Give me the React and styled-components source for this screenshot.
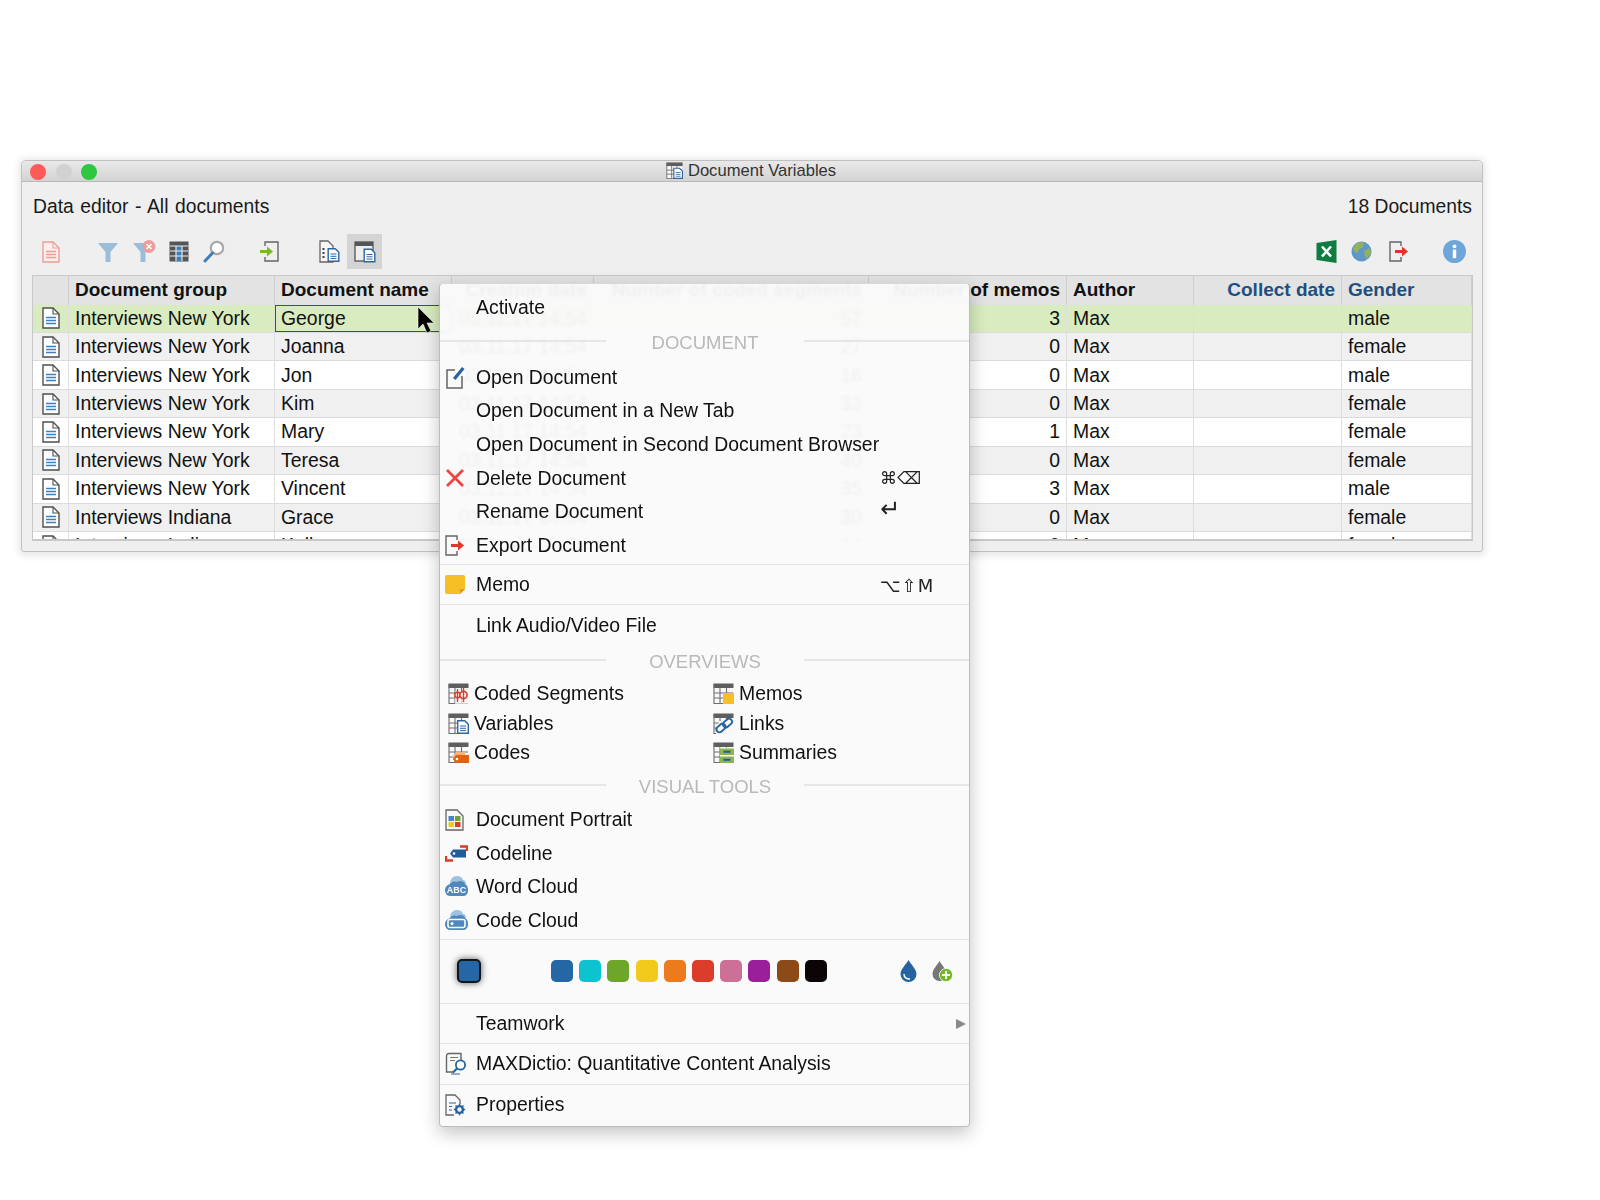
import React from 'react';
import styled, { createGlobalStyle } from 'styled-components';

const GlobalStyle = createGlobalStyle`
    html, body {
        margin: 0;
        background: #fff;
        font-family: "Liberation Sans", Arial, sans-serif;
        color: #111;
    }
`;

const COLS = '36px 206px 177px 142px 275px 198px 127px 148px 130px';

const Page = styled.div`
    position: relative;
    height: 1200px;
    padding: 160px 0 0 21px;
    box-sizing: border-box;
    overflow: hidden;
`;

const Win = styled.div`
    width: 1462px;
    height: 392px;
    box-sizing: border-box;
    background: #efefef;
    border: 1px solid #c0c0c0;
    border-radius: 5px 5px 3px 3px;
    box-shadow: 0 1px 7px 3px rgba(0, 0, 0, 0.09);
    overflow: hidden;
`;

const TitleBar = styled.div`
    position: relative;
    height: 21px;
    display: flex;
    align-items: center;
    justify-content: center;
    gap: 5px;
    padding: 0 2px 1px 0;
    box-sizing: border-box;
    font-size: 16.6px;
    color: #333;
    background: linear-gradient(#e9e9e9, #d3d3d3);
    border-bottom: 1px solid #b9b9b9;
`;

const Lights = styled.div`
    position: absolute;
    left: 8px;
    top: 2.5px;
    display: flex;
    gap: 9.5px;
`;

const Light = styled.span`
    width: 16px;
    height: 16px;
    border-radius: 50%;
    background: ${p => p.$color};
`;

const HeadRow = styled.div`
    height: 52px;
    padding: 0 10px 2px 11px;
    box-sizing: border-box;
    display: flex;
    align-items: center;
    justify-content: space-between;
    font-size: 19.3px;
    color: #1a1a1a;
`;

const HeadTitle = styled.span`
    word-spacing: 1.2px;
`;

const Toolbar = styled.div`
    height: 35px;
    margin-bottom: 6px;
    padding: 0 10px 0 11px;
    display: flex;
    align-items: center;
`;

const Tool = styled.div`
    width: 35px;
    height: 35px;
    flex: none;
    display: flex;
    align-items: center;
    justify-content: center;
    background: ${p => (p.$active ? '#d4d4d4' : 'transparent')};
`;

const Gap = styled.div`
    flex: ${p => (p.$grow ? 1 : 'none')};
    width: ${p => p.$w || 0}px;
`;

const Table = styled.div`
    margin-left: 10px;
    width: 1441px;
    height: 266px;
    overflow: hidden;
    border: 1px solid #c8c8c8;
    border-width: 1px 1px 2px 1px;
    box-sizing: border-box;
`;

const Row = styled.div`
    display: grid;
    grid-template-columns: ${COLS};
    height: 28.45px;
    box-sizing: border-box;
    font-size: 19.4px;
    background: ${p => (p.$selected ? '#d9ecc0' : p.$odd ? '#f0f0f0' : '#fff')};
    border-bottom: 1px solid #dcdcdc;
`;

const HeadCells = styled(Row)`
    height: 28.5px;
    background: #e3e3e3;
    font-size: 19px;
    font-weight: bold;
    border-bottom: 0;
`;

const Cell = styled.div`
    position: relative;
    display: flex;
    align-items: center;
    justify-content: ${p => (p.$right ? 'flex-end' : p.$center ? 'center' : 'flex-start')};
    padding: 0 6px;
    white-space: nowrap;
    box-sizing: border-box;
    min-width: 0;
    color: ${p => (p.$blue ? '#1d4f80' : 'inherit')};
    border-right: 1px solid ${p => (p.$head ? '#cdcdcd' : '#dedede')};
    outline: ${p => (p.$focus ? '1.5px solid #3a3ae0' : 'none')};
    outline-offset: -1.5px;
`;

const Menu = styled.div`
    position: absolute;
    left: 439px;
    top: 283px;
    width: 531px;
    height: 844px;
    box-sizing: border-box;
    padding-top: 7px;
    background: rgba(250, 250, 250, 0.955);
    backdrop-filter: blur(1.5px);
    border: 1px solid #bdbdbd;
    border-top-color: #d8d8d8;
    border-radius: 4px;
    box-shadow: 0 6px 18px rgba(0, 0, 0, 0.24);
    font-size: 19.4px;
    color: #111;
`;

const Item = styled.div`
    height: ${p => p.$h || 33.6}px;
    display: flex;
    align-items: center;
    white-space: nowrap;
    position: relative;
`;

const Slot = styled.div`
    width: 36px;
    flex: none;
    padding-left: 5px;
    box-sizing: border-box;
    display: flex;
    align-items: center;
`;

const Keys = styled.span`
    position: absolute;
    left: 440px;
    top: 50%;
    transform: translateY(${p => p.$shift || -50}%);
    font-family: "DejaVu Sans", sans-serif;
    font-size: ${p => p.$size || 18}px;
    color: #222;
    letter-spacing: ${p => p.$ls ?? 1}px;
`;

const Divider = styled.div`
    height: 1px;
    margin-top: ${p => p.$mt || 0}px;
    background: #e3e3e3;
`;

const Section = styled.div`
    height: ${p => p.$h || 36}px;
    padding-top: ${p => p.$pt || 0}px;
    box-sizing: border-box;
    display: grid;
    grid-template-columns: 166px 1fr 165px;
    align-items: center;
    font-size: 18.5px;
    color: #b9b9b9;
    text-align: center;
`;

const SectionLine = styled.div`
    height: 2px;
    margin-top: -4px;
    background: #e6e6e6;
`;

const Overview = styled.div`
    display: grid;
    grid-template-columns: 265px 1fr;
    grid-auto-rows: 29.5px;
    padding-left: 8px;
`;

const OverviewItem = styled.div`
    display: flex;
    align-items: center;
    gap: 5px;
`;

const ColorRow = styled.div`
    height: 63px;
    position: relative;
    display: flex;
    align-items: center;
    padding: 0 0 2px 17px;
    box-sizing: border-box;
`;

const CurrentColor = styled.div`
    width: 24px;
    height: 24px;
    box-sizing: border-box;
    border-radius: 5px;
    background: #2566a5;
    border: 2px solid #10161e;
    box-shadow: 0 0 7px rgba(0, 0, 0, 0.65);
    margin-right: 70px;
`;

const Swatch = styled.div`
    width: 22px;
    height: 22px;
    margin-right: 6.2px;
    border-radius: 5px;
    background: ${p => p.$color};
`;

const Drops = styled.div`
    margin-left: auto;
    margin-right: 16px;
    display: flex;
    align-items: center;
    gap: 15px;
`;

const SubArrow = styled.span`
    position: absolute;
    right: 3px;
    top: 50%;
    margin-top: -5px;
    border-left: 10px solid #8a8a8a;
    border-top: 5.5px solid transparent;
    border-bottom: 5.5px solid transparent;
`;

const Pointer = styled.svg`
    position: absolute;
    left: 417px;
    top: 306px;
`;

/* ---- drawings ---- */

const Page17 = ({ stroke = '#4f4f4f', fill = '#fff', line = '#3f7fc0', w = 18, h = 22 }) => (
    <svg width={w} height={h} viewBox="0 0 18 22">
        <path d="M1 1h10l6 6v14H1z" fill={fill} stroke={stroke} strokeWidth="1.4" />
        <path d="M11 1v6h6" fill="none" stroke={stroke} strokeWidth="1.1" />
        <path d="M4 10.5h10M4 13.5h10M4 16.5h10" stroke={line} strokeWidth="1.4" />
    </svg>
);

const FilterIcon = ({ x }) => (
    <svg width="24" height="24" viewBox="0 0 24 24">
        <path d="M1 3h20l-7.5 9v10h-5V12z" fill="#9bbdd8" />
        {x && (
            <g>
                <circle cx="17" cy="6.5" r="6.5" fill="#ee9d9d" />
                <path d="M14.5 4l5 5M19.5 4l-5 5" stroke="#fff" strokeWidth="1.6" />
            </g>
        )}
    </svg>
);

const GridIcon = () => (
    <svg width="20" height="21" viewBox="0 0 20 21">
        <rect x="0.5" y="0.5" width="19" height="20" fill="#555" />
        <rect x="7" y="5" width="6" height="15" fill="#3f7fb8" />
        <path d="M1 5h18M1 10h18M1 15h18M7 5v15M13 5v15" stroke="#eee" strokeWidth="1.1" />
    </svg>
);

const SearchIcon = () => (
    <svg width="22" height="23" viewBox="0 0 22 23">
        <circle cx="14" cy="8" r="6.2" fill="#fff" stroke="#a9a9a9" strokeWidth="2.2" />
        <path d="M9.5 13L2 21" stroke="#3f7fb8" strokeWidth="3" strokeLinecap="round" />
    </svg>
);

const ImportIcon = () => (
    <svg width="19" height="21" viewBox="0 0 19 21">
        <path d="M5 5V1h13v19H5v-4" fill="none" stroke="#666" strokeWidth="1.4" />
        <path d="M0 10.5h8" stroke="#7cb82f" strokeWidth="3" />
        <path d="M7 5.5l6 5-6 5z" fill="#7cb82f" />
    </svg>
);

const ExportIcon = ({ w = 20, h = 21 }) => (
    <svg width={w} height={h} viewBox="0 0 20 21">
        <path d="M12 5V1H1v19h11v-4" fill="none" stroke="#666" strokeWidth="1.4" />
        <path d="M6 10.5h8" stroke="#e0352b" strokeWidth="3" />
        <path d="M13 5.5l6 5-6 5z" fill="#e0352b" />
    </svg>
);

const MiniDoc = ({ x = 0, y = 0 }) => (
    <g transform={`translate(${x} ${y})`}>
        <path d="M0.7 0.7h7l3.6 3.6v9H0.7z" fill="#fff" stroke="#2d669f" strokeWidth="1.4" />
        <path d="M3 6h6M3 8.3h6M3 10.6h6" stroke="#2d669f" strokeWidth="1" />
    </g>
);

const DocListIcon = () => (
    <svg width="21" height="23" viewBox="0 0 21 23">
        <path d="M1 1h8l5 5v16H1z" fill="#f6f6f6" stroke="#666" strokeWidth="1.3" />
        <path d="M3.5 9h2M3.5 13h2M3.5 17h2" stroke="#444" strokeWidth="1.8" />
        <MiniDoc x="8.5" y="8" />
    </svg>
);

const PanelIcon = () => (
    <svg width="22" height="22" viewBox="0 0 22 22">
        <rect x="1" y="1" width="18" height="19" fill="#eee" stroke="#555" strokeWidth="1.3" />
        <rect x="1" y="1" width="18" height="4" fill="#555" />
        <MiniDoc x="9.5" y="7.5" />
    </svg>
);

const ExcelIcon = () => (
    <svg width="22" height="23" viewBox="0 0 21 23">
        <path d="M0 3L20 0v23L0 20z" fill="#107c41" />
        <path d="M5.5 6.5l9 10M14.5 6.5l-9 10" stroke="#fff" strokeWidth="2.6" />
    </svg>
);

const GlobeIcon = () => (
    <svg width="21" height="21" viewBox="0 0 21 21">
        <circle cx="10.5" cy="10.5" r="10" fill="#5f97c6" />
        <path d="M5 3c3-2 6-2 8-1l-1 4-4 2-1 4-4-2-1-3zM13 10l6-3 1 5-4 6-2-3z" fill="#93b25c" />
    </svg>
);

const InfoIcon = () => (
    <svg width="23" height="23" viewBox="0 0 23 23">
        <circle cx="11.5" cy="11.5" r="11.5" fill="#6fa6da" />
        <circle cx="11.5" cy="6.3" r="1.9" fill="#fff" />
        <rect x="9.8" y="9.6" width="3.4" height="8.6" fill="#fff" />
    </svg>
);

const EditIcon = () => (
    <svg width="21" height="24" viewBox="0 0 21 24">
        <path d="M10 5H2v18h15V11" fill="none" stroke="#666" strokeWidth="1.5" />
        <path d="M8 13l9-11 2.5 2L10.5 15z" fill="#25649f" />
    </svg>
);

const CrossIcon = () => (
    <svg width="20" height="20" viewBox="0 0 20 20">
        <path d="M2 2l16 16M18 2L2 18" stroke="#ef4444" strokeWidth="2.8" />
    </svg>
);

const MemoIcon = () => (
    <svg width="20" height="20" viewBox="0 0 20 20">
        <path d="M2 0h16a2 2 0 012 2v12l-5 5H2a2 2 0 01-2-2V2a2 2 0 012-2z" fill="#f6bf26" />
        <path d="M20 14h-5v5z" fill="#dd9f10" />
    </svg>
);

const TableBase = ({ children, sm }) => (
    <svg width={sm ? 17 : 21} height={sm ? 17 : 21} viewBox="0 0 21 21">
        <path d="M1 20V1h19v19z" fill="#f8f8f8" />
        <rect x="0.5" y="0.5" width="20" height="4.5" fill="#5e5e5e" />
        <path d="M1 1v19.5h19M1 10h19M1 15h19M7 5v15M13.5 5v15" fill="none" stroke="#6e6e6e" strokeWidth="1.1" />
        {children}
    </svg>
);

const CodedIcon = () => (
    <TableBase>
        <path d="M7 8h14v13H7z" fill="#f8f8f8" opacity="0.7" />
        <circle cx="9.5" cy="12" r="2.7" fill="#fff" stroke="#dd3c2c" strokeWidth="1.5" />
        <circle cx="15.5" cy="12" r="3.6" fill="#fff" stroke="#dd3c2c" strokeWidth="1.6" />
        <path d="M9.5 6v13M15.5 4v15" stroke="#dd3c2c" strokeWidth="1.4" />
    </TableBase>
);

const VariablesIcon = () => (
    <TableBase>
        <MiniDoc x="9" y="7" />
    </TableBase>
);

const TagShape = ({ x = 0, y = 0, fill = '#e2620f' }) => (
    <g transform={`translate(${x} ${y})`}>
        <path d="M3 0h13v8H3L0 4z" fill={fill} />
        <circle cx="4" cy="4" r="1.3" fill="#fff" />
    </g>
);

const CodesIcon = () => (
    <TableBase>
        <path d="M5 14l3-4h9v3H9l-1 5H5z" fill="#f3b27e" />
        <TagShape x="5" y="13" />
    </TableBase>
);

const MemosIcon = () => (
    <TableBase>
        <rect x="10" y="10" width="11" height="11" fill="#f6bf26" />
    </TableBase>
);

const LinksIcon = () => (
    <TableBase>
        <path d="M6 8h15v13H3z" fill="#f8f8f8" />
        <rect x="3" y="12" width="10" height="6" rx="3" transform="rotate(-42 8 15)" fill="none" stroke="#25649f" strokeWidth="1.9" />
        <rect x="9.5" y="7" width="10" height="6" rx="3" transform="rotate(-42 14.5 10)" fill="none" stroke="#25649f" strokeWidth="1.9" />
    </TableBase>
);

const SummariesIcon = () => (
    <TableBase>
        <path d="M7 5.5h14V21H7z" fill="#fafafa" />
        <rect x="7" y="6.5" width="14" height="6.5" fill="#8db64a" />
        <rect x="7" y="14.5" width="14" height="6.5" fill="#8db64a" />
        <path d="M10.5 9.8h7M10.5 17.8h7" stroke="#1f5c99" strokeWidth="2" />
    </TableBase>
);

const PortraitIcon = () => (
    <svg width="19" height="22" viewBox="0 0 19 22">
        <path d="M1 1h11l6 6v14H1z" fill="#f8f8f8" stroke="#666" strokeWidth="1.3" />
        <rect x="3.5" y="7" width="5.5" height="5" fill="#4a84bf" />
        <rect x="10" y="7" width="5.5" height="5" fill="#6ea62b" />
        <rect x="3.5" y="13" width="5.5" height="5" fill="#f2ca1b" />
        <rect x="10" y="13" width="5.5" height="5" fill="#dc3c2a" />
    </svg>
);

const CodelineIcon = () => (
    <svg width="23" height="17" viewBox="0 0 23 17">
        <path d="M15 1.5h7V6M8 15.5H1V11" fill="none" stroke="#dc3c2a" strokeWidth="2.4" />
        <TagShape x="5" y="4.5" fill="#1f5c99" />
    </svg>
);

const CloudShape = () => (
    <g>
        <path d="M5 8c0-5 3-8 7-8 3 0 5 1 6 4 2 0 3 2 3 4z" fill="#9fc1e0" />
        <path d="M5 8c2-3 5-3 7-2 3-2 7-1 8 2 2 1 3 3 3 6 0 4-2 6-5 6H5c-3 0-5-3-5-6s2-5 5-6z" fill="#4f88bd" />
    </g>
);

const WordCloudIcon = () => (
    <svg width="23" height="21" viewBox="0 0 23 21">
        <CloudShape />
        <text x="11.5" y="17" fontSize="9" fontWeight="bold" textAnchor="middle" fill="#fff" fontFamily="Liberation Sans, sans-serif">ABC</text>
    </svg>
);

const CodeCloudIcon = () => (
    <svg width="23" height="21" viewBox="0 0 23 21">
        <CloudShape />
        <rect x="3" y="9.5" width="17" height="8" rx="2" fill="none" stroke="#fafafa" strokeWidth="1.6" />
        <circle cx="7" cy="13.5" r="1.5" fill="#fff" />
    </svg>
);

const DictioIcon = () => (
    <svg width="23" height="23" viewBox="0 0 23 23">
        <path d="M9 20H1.5V4C1.5 2.5 2.5 1.5 4 1.5h12v7" fill="none" stroke="#666" strokeWidth="1.4" />
        <path d="M5 5.5h8M5 8.5h5" stroke="#777" strokeWidth="1.2" />
        <circle cx="15.5" cy="13" r="4.6" fill="#fff" stroke="#25649f" strokeWidth="1.8" />
        <path d="M12 16.5l-4 4" stroke="#25649f" strokeWidth="2.2" />
        <path d="M6 22h9" stroke="#25649f" strokeWidth="1" />
    </svg>
);

const PropsIcon = () => (
    <svg width="21" height="22" viewBox="0 0 21 22">
        <path d="M9 21H1V1h9l5 5v4" fill="none" stroke="#666" strokeWidth="1.3" />
        <path d="M4 9h7M4 12.5h3M4 16h3" stroke="#25649f" strokeWidth="1.2" />
        <circle cx="14.5" cy="15.5" r="3.4" fill="none" stroke="#25649f" strokeWidth="2.4" />
        <path d="M14.5 9.8v11.4M8.8 15.5h11.4M10.5 11.5l8 8M18.5 11.5l-8 8" stroke="#25649f" strokeWidth="1.4" strokeDasharray="2.2 7" />
    </svg>
);

const DropIcon = () => (
    <svg width="17" height="22" viewBox="0 0 17 22">
        <path d="M8.5 0c2 4 8 9 8 14a8 8 0 01-16 0c0-5 6-10 8-14z" fill="#25649f" />
        <path d="M4 14c0 3 2 5 6 5" fill="none" stroke="#fafafa" strokeWidth="1.5" />
    </svg>
);

const DropPlusIcon = () => (
    <svg width="21" height="22" viewBox="0 0 21 22">
        <path d="M7.5 1c2 4 7 8 7 13a7 7 0 01-14 0c0-5 5-9 7-13z" fill="#777" />
        <circle cx="14" cy="15" r="6.6" fill="#76b82a" stroke="#fafafa" strokeWidth="0.8" />
        <path d="M14 11v8M10 15h8" stroke="#fff" strokeWidth="2" />
    </svg>
);

const rows = [
    ['Interviews New York', 'George', 57, 3, 'male'],
    ['Interviews New York', 'Joanna', 27, 0, 'female'],
    ['Interviews New York', 'Jon', 16, 0, 'male'],
    ['Interviews New York', 'Kim', 33, 0, 'female'],
    ['Interviews New York', 'Mary', 23, 1, 'female'],
    ['Interviews New York', 'Teresa', 40, 0, 'female'],
    ['Interviews New York', 'Vincent', 35, 3, 'male'],
    ['Interviews Indiana', 'Grace', 30, 0, 'female'],
    ['Interviews Indiana', 'Kelly', 26, 0, 'female'],
];

const swatches = ['#2566a5', '#0dc3cf', '#6ea62b', '#f2ca1b', '#ec7b1d', '#dc3c2a', '#cd7098', '#99209a', '#8b4a17', '#0c0505'];

function MenuItem({ icon, children, h }) {
    return (
        <Item $h={h}>
            <Slot>{icon}</Slot>
            {children}
        </Item>
    );
}

function SectionTitle({ children, h, pt }) {
    return (
        <Section $h={h} $pt={pt}>
            <SectionLine />
            <span>{children}</span>
            <SectionLine />
        </Section>
    );
}

export default function App() {
    return (
        <Page>
            <GlobalStyle />
            <Win>
                <TitleBar>
                    <Lights>
                        <Light $color="#fc5b57" />
                        <Light $color="#d2d2d2" />
                        <Light $color="#2ec73f" />
                    </Lights>
                    <TableBase sm>
                        <MiniDoc x="9" y="7" />
                    </TableBase>
                    Document Variables
                </TitleBar>
                <HeadRow>
                    <HeadTitle>Data editor - All documents</HeadTitle>
                    <span>18 Documents</span>
                </HeadRow>
                <Toolbar>
                    <Tool><Page17 stroke="#ec9f95" fill="#fbeeec" line="#ec9f95" /></Tool>
                    <Gap $w={23} />
                    <Tool><FilterIcon /></Tool>
                    <Tool><FilterIcon x /></Tool>
                    <Tool><GridIcon /></Tool>
                    <Tool><SearchIcon /></Tool>
                    <Gap $w={21} />
                    <Tool><ImportIcon /></Tool>
                    <Gap $w={25} />
                    <Tool><DocListIcon /></Tool>
                    <Tool $active><PanelIcon /></Tool>
                    <Gap $grow />
                    <Tool><ExcelIcon /></Tool>
                    <Tool><GlobeIcon /></Tool>
                    <Gap $w={2} />
                    <Tool><ExportIcon /></Tool>
                    <Gap $w={21} />
                    <Tool><InfoIcon /></Tool>
                </Toolbar>
                <Table>
                    <HeadCells>
                        <Cell $head />
                        <Cell $head>Document group</Cell>
                        <Cell $head>Document name</Cell>
                        <Cell $head $right>Creation date</Cell>
                        <Cell $head $right>Number of coded segments</Cell>
                        <Cell $head $right>Number of memos</Cell>
                        <Cell $head>Author</Cell>
                        <Cell $head $right $blue>Collect date</Cell>
                        <Cell $head $blue>Gender</Cell>
                    </HeadCells>
                    {rows.map((r, i) => (
                        <Row key={r[1]} $selected={i === 0} $odd={i % 2 === 1}>
                            <Cell $center><Page17 /></Cell>
                            <Cell>{r[0]}</Cell>
                            <Cell $focus={i === 0}>{r[1]}</Cell>
                            <Cell $right>03.11.17 14:54</Cell>
                            <Cell $right>{r[2]}</Cell>
                            <Cell $right>{r[3]}</Cell>
                            <Cell>Max</Cell>
                            <Cell />
                            <Cell>{r[4]}</Cell>
                        </Row>
                    ))}
                </Table>
            </Win>

            <Pointer width="18" height="28" viewBox="0 0 18 28">
                <path d="M1 1v22l5-5 4 9 4-2-4-8h7z" fill="#000" stroke="#fff" strokeWidth="0.6" />
            </Pointer>

            <Menu>
                <MenuItem>Activate</MenuItem>
                <SectionTitle>DOCUMENT</SectionTitle>
                <MenuItem icon={<EditIcon />}>Open Document</MenuItem>
                <MenuItem>Open Document in a New Tab</MenuItem>
                <MenuItem>Open Document in Second Document Browser</MenuItem>
                <MenuItem icon={<CrossIcon />}>
                    Delete Document
                    <Keys $size={17} $ls={0}>⌘⌫</Keys>
                </MenuItem>
                <MenuItem>
                    Rename Document
                    <Keys $size={24} $shift={-60}>↵</Keys>
                </MenuItem>
                <MenuItem icon={<ExportIcon />}>Export Document</MenuItem>
                <Divider $mt={2} />
                <MenuItem icon={<MemoIcon />} h={39}>
                    Memo
                    <Keys>⌥⇧M</Keys>
                </MenuItem>
                <Divider />
                <MenuItem h={40}>Link Audio/Video File</MenuItem>
                <SectionTitle h={34}>OVERVIEWS</SectionTitle>
                <Overview>
                    <OverviewItem><CodedIcon />Coded Segments</OverviewItem>
                    <OverviewItem><MemosIcon />Memos</OverviewItem>
                    <OverviewItem><VariablesIcon />Variables</OverviewItem>
                    <OverviewItem><LinksIcon />Links</OverviewItem>
                    <OverviewItem><CodesIcon />Codes</OverviewItem>
                    <OverviewItem><SummariesIcon />Summaries</OverviewItem>
                </Overview>
                <SectionTitle h={35.5} pt={3}>VISUAL TOOLS</SectionTitle>
                <MenuItem icon={<PortraitIcon />} h={33.5}>Document Portrait</MenuItem>
                <MenuItem icon={<CodelineIcon />} h={33.5}>Codeline</MenuItem>
                <MenuItem icon={<WordCloudIcon />} h={33.5}>Word Cloud</MenuItem>
                <MenuItem icon={<CodeCloudIcon />} h={33.5}>Code Cloud</MenuItem>
                <Divider $mt={2} />
                <ColorRow>
                    <CurrentColor />
                    {swatches.map(c => <Swatch key={c} $color={c} />)}
                    <Drops>
                        <DropIcon />
                        <DropPlusIcon />
                    </Drops>
                </ColorRow>
                <Divider />
                <MenuItem h={39}>
                    Teamwork
                    <SubArrow />
                </MenuItem>
                <Divider />
                <MenuItem icon={<DictioIcon />} h={39.5}>MAXDictio: Quantitative Content Analysis</MenuItem>
                <Divider />
                <MenuItem icon={<PropsIcon />} h={40}>Properties</MenuItem>
            </Menu>
        </Page>
    );
}
